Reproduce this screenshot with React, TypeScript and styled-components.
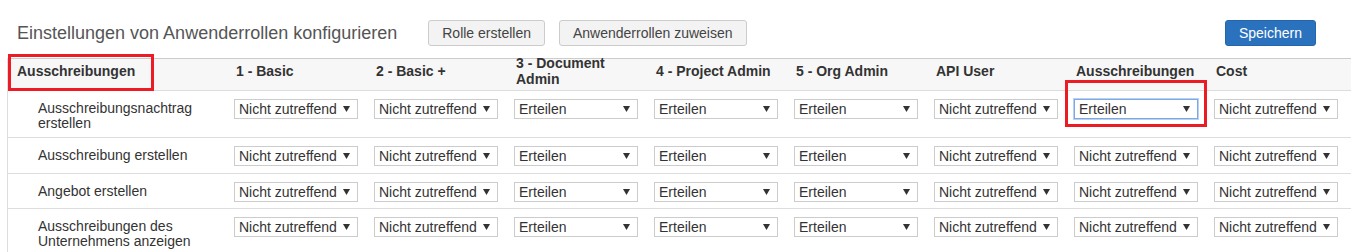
import React from "react";
import styled, { createGlobalStyle } from "styled-components";

const GlobalStyle = createGlobalStyle`
  html, body {
    margin: 0;
    padding: 0;
    background: #ffffff;
  }
  body {
    font-family: "Liberation Sans", Arial, sans-serif;
    font-size: 14px;
    color: #333333;
  }
  * { box-sizing: border-box; }
`;

const Page = styled.div`
  position: relative;
  width: 1351px;
  height: 252px;
  overflow: hidden;
`;

const Toolbar = styled.div`
  display: flex;
  align-items: center;
  height: 26px;
  margin: 20px 35px 12px 17px;
`;

const Title = styled.h1`
  margin: 0 31px 0 0;
  font-size: 18px;
  font-weight: normal;
  color: #555555;
  white-space: nowrap;
`;

const Button = styled.button<{ $primary?: boolean }>`
  height: 26px;
  margin-right: ${(p) => (p.$primary ? "0" : "14px")};
  padding: 4px 13px 4px;
  font-family: "Liberation Sans", Arial, sans-serif;
  font-size: 14px;
  line-height: 16px;
  border-radius: 3px;
  border: 1px solid ${(p) => (p.$primary ? "#2566ab" : "#cccccc")};
  background: ${(p) => (p.$primary ? "#2b72be" : "#f3f3f3")};
  color: ${(p) => (p.$primary ? "#ffffff" : "#444444")};
  white-space: nowrap;
`;

const Spacer = styled.div`
  flex: 1;
`;

const Table = styled.div`
  margin-left: 7px;
  border-left: 1px solid #dddddd;
`;

const cols = "218px repeat(7, 140px) 1fr";

const HeadRow = styled.div`
  display: grid;
  grid-template-columns: ${cols};
  grid-template-rows: 24px;
  box-sizing: content-box;
  height: 24px;
  padding-bottom: 7px;
  background: #f7f7f7;
  border-top: 1px solid #cccccc;
  border-bottom: 1px solid #dddddd;
`;

const HeadCell = styled.div<{ $first?: boolean }>`
  display: flex;
  align-items: center;
  height: 24px;
  padding: 0 8px 0 ${(p) => (p.$first ? "9px" : "10px")};
  font-weight: bold;
  font-size: 14px;
  line-height: 16px;
  color: #333333;
`;

const BodyRow = styled.div`
  display: grid;
  grid-template-columns: ${cols};
  align-items: start;
  border-bottom: 1px solid #dddddd;
`;

const LabelCell = styled.div`
  padding: 10px 8px 7px 30px;
  font-size: 14px;
  line-height: 14.5px;
  color: #333333;
`;

const Cell = styled.div`
  padding: 8px 8px 6.5px 8px;
`;

const SelectBox = styled.div<{ $focused?: boolean }>`
  display: flex;
  align-items: center;
  width: 124px;
  height: 20px;
  padding: 0 7px 0 4px;
  background: #ffffff;
  border: 1px solid ${(p) => (p.$focused ? "#7ca8e6" : "#cccccc")};
  box-shadow: ${(p) => (p.$focused ? "0 0 0 1px #b9d1f3" : "none")};
  font-size: 14px;
  line-height: 16px;
  color: #333333;
  white-space: nowrap;
  overflow: hidden;
`;

const SelectText = styled.span`
  flex: 1;
  overflow: hidden;
`;

const Arrow = styled.svg`
  flex: none;
  width: 7px;
  height: 6px;
  margin-left: 3px;
`;

const Marker = styled.div<{ $x: number; $y: number; $w: number; $h: number }>`
  position: absolute;
  left: ${(p) => p.$x}px;
  top: ${(p) => p.$y}px;
  width: ${(p) => p.$w}px;
  height: ${(p) => p.$h}px;
  border: 3px solid #ec1c24;
  pointer-events: none;
`;

const N = "Nicht zutreffend";
const E = "Erteilen";

const columns = [
  "1 - Basic",
  "2 - Basic +",
  "3 - Document Admin",
  "4 - Project Admin",
  "5 - Org Admin",
  "API User",
  "Ausschreibungen",
  "Cost",
];

const rows: { label: string; values: string[]; focus?: number }[] = [
  { label: "Ausschreibungsnachtrag erstellen", values: [N, N, E, E, E, N, E, N], focus: 6 },
  { label: "Ausschreibung erstellen", values: [N, N, E, E, E, N, N, N] },
  { label: "Angebot erstellen", values: [N, N, E, E, E, N, N, N] },
  { label: "Ausschreibungen des Unternehmens anzeigen", values: [N, N, E, E, E, N, N, N] },
];

function Dropdown({ value, focused }: { value: string; focused?: boolean }) {
  return (
    <SelectBox $focused={focused}>
      <SelectText>{value}</SelectText>
      <Arrow viewBox="0 0 7 6">
        <polygon points="0,0 7,0 3.5,6" fill="#333333" />
      </Arrow>
    </SelectBox>
  );
}

export default function App() {
  return (
    <>
      <GlobalStyle />
      <Page>
        <Toolbar>
          <Title>Einstellungen von Anwenderrollen konfigurieren</Title>
          <Button>Rolle erstellen</Button>
          <Button>Anwenderrollen zuweisen</Button>
          <Spacer />
          <Button $primary>Speichern</Button>
        </Toolbar>
        <Table>
          <HeadRow>
            <HeadCell $first><span>Ausschreibungen</span></HeadCell>
            {columns.map((c) => (
              <HeadCell key={c}><span>{c}</span></HeadCell>
            ))}
            <div />
          </HeadRow>
          {rows.map((r) => (
            <BodyRow key={r.label}>
              <LabelCell>{r.label}</LabelCell>
              {r.values.map((v, i) => (
                <Cell key={i}>
                  <Dropdown value={v} focused={r.focus === i} />
                </Cell>
              ))}
              <div />
            </BodyRow>
          ))}
        </Table>
        <Marker $x={8} $y={54} $w={146} $h={37} />
        <Marker $x={1065} $y={80} $w={142} $h={47} />
      </Page>
    </>
  );
}
